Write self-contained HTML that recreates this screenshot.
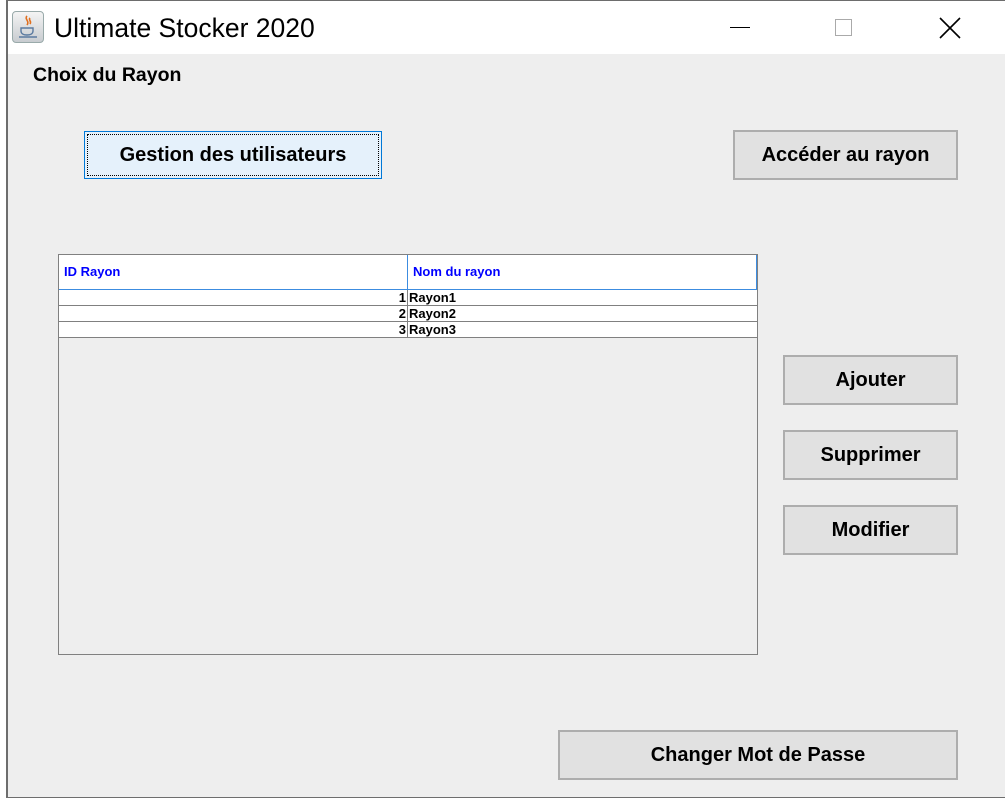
<!DOCTYPE html><html><head><style>
body{margin:0;width:1005px;height:800px;background:#fff;position:relative;overflow:hidden;font-family:"Liberation Sans",sans-serif}
.win{position:absolute;left:6px;top:0;width:997px;height:796px;border:1px solid #6d6d6d;border-width:1px 1px 1px 2px;background:#eeeeee}
.tb{position:absolute;left:0;top:0;width:997px;height:53px;background:#fff}
.title{position:absolute;left:46px;top:12px;font-size:26.5px;color:#000}
.btn{position:absolute;background:#e1e1e1;border:2px solid #adadad;box-sizing:border-box;font-weight:bold;font-size:20px;display:flex;align-items:center;justify-content:center}
.a{position:absolute}
table{border-collapse:collapse;font-size:13px;font-weight:bold}
</style></head><body>
<div class="win">
<div class="tb">
<div class="a" style="left:4px;top:10px;width:32px;height:32px;border:1px solid #9aa;border-radius:4px;background:linear-gradient(#f4f4f4,#c8ccd0);box-sizing:border-box"><svg width="30" height="30" viewBox="0 0 30 30"><path d="M14 4c-3 3 3 5 0 9M17 6c-2 2 2 3 0 6" stroke="#e07020" stroke-width="1.6" fill="none"/><path d="M8 16h12v3c0 3-3 4-6 4s-6-1-6-4z" fill="none" stroke="#5a7aa0" stroke-width="1.4"/><path d="M6 25h18" stroke="#5a7aa0" stroke-width="1.4"/></svg></div>
<div class="title">Ultimate Stocker 2020</div>
<div class="a" style="left:722px;top:26px;width:20px;height:1px;background:#000"></div>
<div class="a" style="left:827px;top:18px;width:17px;height:17px;border:1px solid #aaa;box-sizing:border-box"></div>
<svg class="a" style="left:931px;top:16px" width="22" height="22"><path d="M1 1L21 21M21 1L1 21" stroke="#000" stroke-width="1.6"/></svg>
</div>
<div class="a" style="left:25px;top:63px;font-weight:bold;font-size:19.5px">Choix du Rayon</div>
<div class="btn" style="left:76px;top:130px;width:298px;height:48px;background:#e5f1fb;border:1px solid #0078d7;outline:1px dotted #000;outline-offset:-4px">Gestion des utilisateurs</div>
<div class="btn" style="left:725px;top:129px;width:225px;height:50px">Accéder au rayon</div>
<div class="btn" style="left:775px;top:354px;width:175px;height:50px">Ajouter</div>
<div class="btn" style="left:775px;top:429px;width:175px;height:50px">Supprimer</div>
<div class="btn" style="left:775px;top:504px;width:175px;height:50px">Modifier</div>
<div class="btn" style="left:550px;top:729px;width:400px;height:50px">Changer Mot de Passe</div>
<div class="a" style="left:50px;top:253px;width:698px;height:399px;border:1px solid #808080;background:#eeeeee">
<table style="width:698px">
<tr style="height:34px;background:#fff;color:#0000ff;border-bottom:1px solid #3c8ce0"><td style="width:343px;padding:0 0 0 5px;border-right:1px solid #3c8ce0">ID Rayon</td><td style="padding:0 0 0 5px;border-right:1px solid #3c8ce0">Nom du rayon</td></tr>
<tr style="height:15px;background:#fff;border-bottom:1px solid #808080"><td style="text-align:right;padding:0 1px;border-right:1px solid #808080">1</td><td style="padding:0 1px">Rayon1</td></tr>
<tr style="height:15px;background:#fff;border-bottom:1px solid #808080"><td style="text-align:right;padding:0 1px;border-right:1px solid #808080">2</td><td style="padding:0 1px">Rayon2</td></tr>
<tr style="height:15px;background:#fff;border-bottom:1px solid #808080"><td style="text-align:right;padding:0 1px;border-right:1px solid #808080">3</td><td style="padding:0 1px">Rayon3</td></tr>
</table></div>
</div>
</body></html>
